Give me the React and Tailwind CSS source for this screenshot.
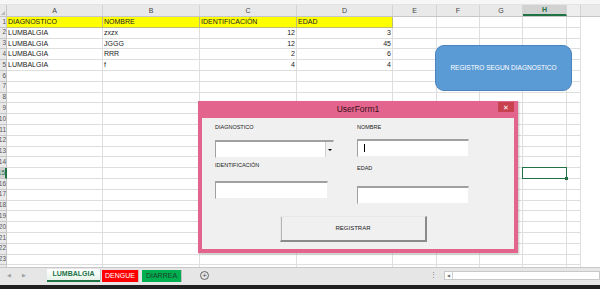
import React from "react";

const cols = [
    { key: "A", w: "w-[96px]" },
    { key: "B", w: "w-[97px]" },
    { key: "C", w: "w-[97px]" },
    { key: "D", w: "w-[96px]" },
    { key: "E", w: "w-[44px]" },
    { key: "F", w: "w-[43px]" },
    { key: "G", w: "w-[43px]" },
    { key: "H", w: "w-[44px]" },
    { key: "I", w: "w-[14px]" },
];

const data = [
    ["DIAGNOSTICO", "NOMBRE", "IDENTIFICACIÓN", "EDAD"],
    ["LUMBALGIA", "zxzx", "12", "3"],
    ["LUMBALGIA", "JGGG", "12", "45"],
    ["LUMBALGIA", "RRR", "2", "6"],
    ["LUMBALGIA", "f", "4", "4"],
];

const rowCount = 24;

function Cell({ col, row, children }) {
    const header = row === 0 && ["A", "B", "C", "D"].includes(col.key);
    const right = row > 0 && (col.key === "C" || col.key === "D");
    const selected = row === 14 && col.key === "H";
    return (
        <div
            className={`${col.w} h-full shrink-0 border-r border-b whitespace-nowrap px-[1px] leading-[10px] ${
                header
                    ? "bg-[#ffff00] border-[#bdbd7a]"
                    : "border-[#dedede]"
            } ${right ? "text-right" : ""} ${
                selected ? "relative" : "overflow-hidden"
            }`}
        >
            {children}
            {selected && (
                <div className="absolute -top-[1px] -left-[1px] -right-[1px] -bottom-[1px] z-10 border-[1.5px] border-[#217346]">
                    <div className="absolute -right-[2px] -bottom-[2px] w-[3px] h-[3px] bg-[#217346]" />
                </div>
            )}
        </div>
    );
}

function TextBox({ className = "", children }) {
    return (
        <div
            className={`h-[18px] bg-white border-t-2 border-l border-t-[#a0a0a0] border-l-[#a0a0a0] border-r border-b border-r-[#f0f0f0] border-b-[#f0f0f0] relative ${className}`}
        >
            {children}
        </div>
    );
}

export default function App() {
    return (
        <div
            className="w-[600px] h-[289px] relative overflow-hidden bg-white text-[7px] text-[#222]"
            style={{ fontFamily: '"Liberation Sans", Arial, sans-serif' }}
        >
            {/* top strip */}
            <div className="h-[5px] bg-[#f7f7f7] border-b border-[#e3e3e3]" />

            {/* column headers */}
            <div className="h-[12px] flex bg-[#e9e9e9] border-b border-[#c6c6c6]">
                <div className="w-[7px] shrink-0 border-r border-[#c6c6c6] relative">
                    <div className="absolute right-[1px] bottom-[1px] w-0 h-0 border-l-[4px] border-l-transparent border-b-[4px] border-b-[#b8b8b8]" />
                </div>
                {cols.map((c) => (
                    <div
                        key={c.key}
                        className={`${c.w} shrink-0 border-r border-[#d4d4d4] flex items-center justify-center leading-none ${
                            c.key === "H"
                                ? "bg-[#d2d2d2] text-[#217346] font-bold border-b-2 border-b-[#217346]"
                                : c.key === "I"
                                ? "bg-[#eeeeee]"
                                : "text-[#444]"
                        }`}
                    >
                        {c.key === "I" ? "" : c.key}
                    </div>
                ))}
            </div>

            {/* grid rows */}
            <div className="h-[250px] overflow-hidden">
                {Array.from({ length: rowCount }).map((_, r) => (
                    <div key={r} className="h-[10.8px] flex">
                        <div
                            className={`w-[7px] shrink-0 border-r border-b overflow-hidden flex justify-end items-center leading-none ${
                                r === 14
                                    ? "bg-[#d2d2d2] text-[#217346] border-r-2 border-r-[#217346] border-b-[#c6c6c6]"
                                    : "bg-[#e9e9e9] text-[#555] border-[#c6c6c6]"
                            }`}
                        >
                            <span className="text-[6.5px]">{r + 1}</span>
                        </div>
                        {cols.map((c, ci) => (
                            <Cell key={c.key} col={c} row={r}>
                                {data[r] && ci < 4 ? data[r][ci] : ""}
                            </Cell>
                        ))}
                    </div>
                ))}
            </div>

            {/* sheet tabs */}
            <div className="h-[18px] bg-[#e6e6e6] border-t border-[#c8c8c8] flex items-start">
                <div className="w-[47px] flex items-center gap-[11px] pl-[7px] pt-[4px] text-[#a0a0a0] text-[5px]">
                    <span>◀</span>
                    <span>▶</span>
                </div>
                <div className="w-[53px] h-[13px] mt-[1px] bg-gradient-to-b from-white to-[#e6f2ea] border-b-2 border-[#217346] flex items-center justify-center text-[#217346] font-bold text-[7px] shadow-[1px_0_0_#c0c0c0]">
                    LUMBALGIA
                </div>
                <div className="w-[37px] h-[12px] mt-[2px] ml-[2px] bg-[#ff0000] flex items-center justify-center text-white text-[7px] border-r border-[#c0c0c0]">
                    DENGUE
                </div>
                <div className="w-[40px] h-[12px] mt-[2px] ml-[3px] bg-[#00b050] flex items-center justify-center text-[#1d3b2a] text-[7px] border-r border-[#c0c0c0]">
                    DIARREA
                </div>
                <div className="ml-[18px] mt-[3px] w-[9px] h-[9px] rounded-full border border-[#666] flex items-center justify-center text-[#555] text-[8px] leading-none">
                    +
                </div>
                <div className="ml-[221px] mt-[3px] text-[#777] text-[7px] leading-none">⋮</div>
                <div className="ml-[7px] mt-[3px] flex-1 h-[9px] bg-white border border-[#c8c8c8] flex items-center">
                    <div className="w-[8px] h-full border-r border-[#d0d0d0] flex items-center justify-center text-[4px] text-[#666]">
                        ◀
                    </div>
                </div>
            </div>
            <div className="h-[4px] bg-[#202020]" />

            {/* shape button */}
            <div className="absolute left-[435px] top-[45px] w-[137px] h-[46px] rounded-[9px] bg-[#5b9bd5] border border-[#4a84ba] flex items-center justify-center text-white text-[6.5px]">
                REGISTRO SEGUN DIAGNOSTICO
            </div>

            {/* UserForm */}
            <div className="absolute left-[198px] top-[101px] w-[320px] h-[152px] bg-[#e3648c] flex flex-col shadow-[1px_1px_2px_rgba(0,0,0,0.25)]">
                <div className="h-[17px] shrink-0 flex items-start relative">
                    <div className="flex-1 text-center text-[#3a1020] text-[8.5px] leading-[17px]">
                        UserForm1
                    </div>
                    <div className="absolute right-[4px] top-[1px] w-[16px] h-[10px] bg-[#c8414f] flex items-center justify-center text-white text-[7px] leading-none">
                        ✕
                    </div>
                </div>
                <div className="flex-1 mx-[4px] mb-[4px] bg-[#f0f0f0] text-[5.5px] text-[#222] pl-[13px] pt-[6px]">
                    <div className="flex">
                        <div className="w-[119px]">
                            <div className="h-[7px] leading-[7px]">DIAGNOSTICO</div>
                            <TextBox className="mt-[9px] w-[119px]">
                                <div className="absolute right-0 top-0 w-[8px] h-full bg-[#f0f0f0] border-l border-[#d0d0d0] flex items-center justify-center">
                                    <div className="w-0 h-0 border-l-[2px] border-r-[2px] border-t-[2px] border-l-transparent border-r-transparent border-t-black" />
                                </div>
                            </TextBox>
                            <div className="mt-[4px] h-[7px] leading-[7px]">IDENTIFICACIÓN</div>
                            <TextBox className="mt-[12px] w-[113px]" />
                        </div>
                        <div className="w-[112px] ml-[23px]">
                            <div className="h-[7px] leading-[7px]">NOMBRE</div>
                            <TextBox className="mt-[8px] w-[112px]">
                                <div className="absolute left-[6px] top-[3px] w-[1px] h-[8px] bg-black" />
                            </TextBox>
                            <div className="mt-[8px] h-[7px] leading-[7px]">EDAD</div>
                            <TextBox className="mt-[14px] w-[112px]" />
                        </div>
                    </div>
                    <div className="mt-[12px] ml-[65px] w-[147px] h-[26px] bg-[#f0f0f0] border-t border-l border-[#e8e8e8] border-r-2 border-b-2 border-r-[#8a8a8a] border-b-[#8a8a8a] shadow-[inset_1px_0_0_#b5b5b5] flex items-center justify-center text-[6px]">
                        REGISTRAR
                    </div>
                </div>
            </div>
        </div>
    );
}
